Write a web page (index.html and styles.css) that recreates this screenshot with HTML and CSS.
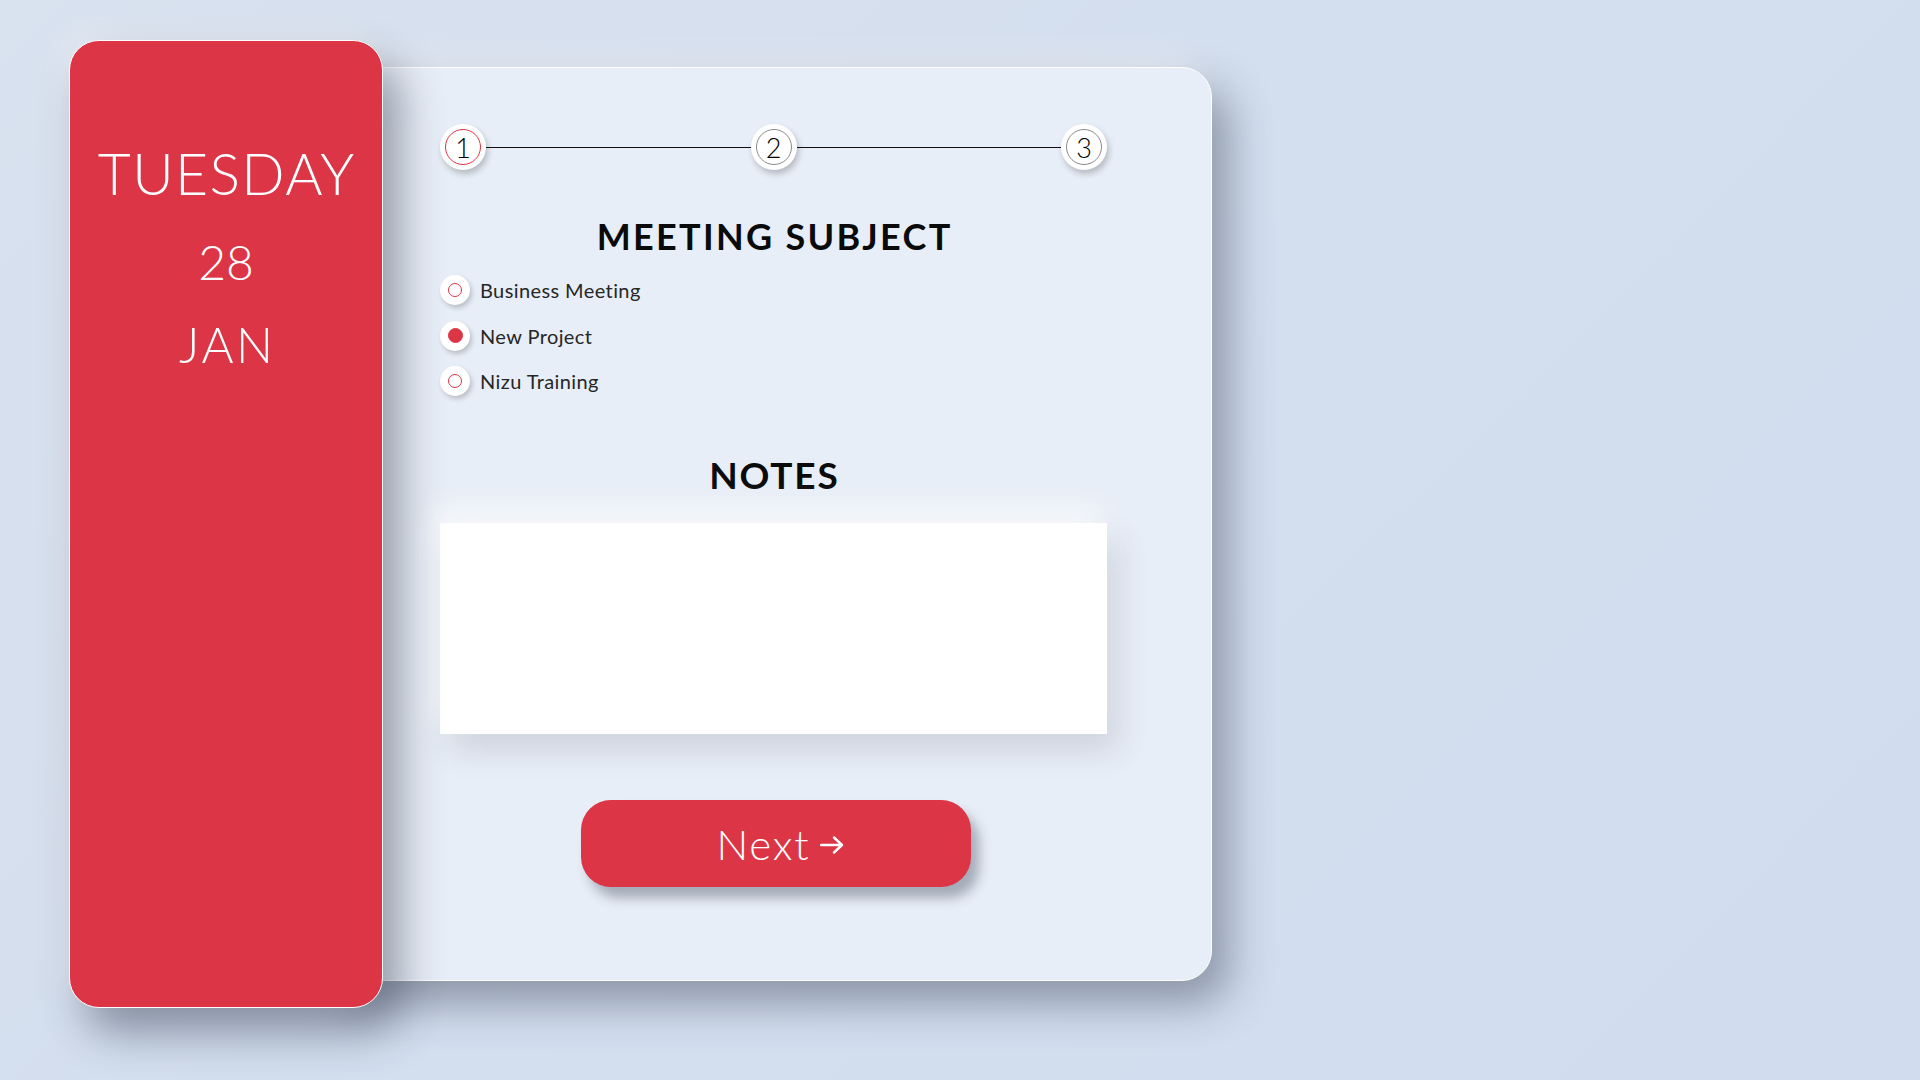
FILE: index.html
```html
<!DOCTYPE html>
<html lang="en">
<head>
<meta charset="utf-8">
<title>Meeting</title>
<link rel="stylesheet" href="styles.css">
</head>
<body>
<div class="scene">
  <aside class="date-panel">
    <div class="day">TUESDAY</div>
    <div class="num">28</div>
    <div class="month">JAN</div>
  </aside>
  <main class="card">
    <div class="steps">
      <div class="step active"><span class="ring">1</span></div>
      <div class="step-line"></div>
      <div class="step"><span class="ring">2</span></div>
      <div class="step-line"></div>
      <div class="step"><span class="ring">3</span></div>
    </div>
    <h2 class="section-title subject-title">MEETING SUBJECT</h2>
    <div class="options">
      <label class="option"><span class="radio"><span class="mark"></span></span><span class="opt-label">Business Meeting</span></label>
      <label class="option"><span class="radio checked"><span class="mark"></span></span><span class="opt-label">New Project</span></label>
      <label class="option"><span class="radio"><span class="mark"></span></span><span class="opt-label">Nizu Training</span></label>
    </div>
    <h2 class="section-title notes-title">NOTES</h2>
    <div class="notes"></div>
    <div class="actions">
      <button class="next-btn"><span>Next</span><svg class="arrow" width="24" height="18" viewBox="0 0 24 18"><path d="M1 9 H22 M14 1.5 L22 9 L14 16.5" fill="none" stroke="#fff" stroke-width="2.4" stroke-linecap="round" stroke-linejoin="round"/></svg></button>
    </div>
  </main>
</div>
</body>
</html>
```
FILE: styles.css
```css
* { box-sizing: border-box; }
html, body { margin: 0; height: 100%; }
body {
  width: 1920px;
  height: 1080px;
  overflow: hidden;
  background: linear-gradient(135deg, #d9e2ef 0%, #d3deee 45%, #d1dcee 100%);
  font-family: "Lato", "Open Sans", sans-serif;
  color: #111;
}
.scene {
  display: flex;
  align-items: flex-start;
  padding: 40px 0 0 69px;
}
.date-panel {
  position: relative;
  z-index: 2;
  width: 314px;
  height: 968px;
  background: #dc3545;
  border: 1px solid #fff;
  border-radius: 30px;
  box-shadow: 16px 24px 44px rgba(35, 45, 65, 0.45), -8px -8px 24px rgba(255,255,255,0.35);
  display: flex;
  flex-direction: column;
  align-items: center;
  padding-top: 104px;
  color: #fff;
  font-weight: 300;
}
.day { font-size: 57px; line-height: 1; letter-spacing: 1.4px; margin-right: -1.4px; }
.num { font-size: 48px; line-height: 1; margin-top: 36px; }
.month { font-size: 49px; line-height: 1; margin-top: 34px; letter-spacing: 2.5px; margin-right: -2.5px; }

.card {
  position: relative;
  z-index: 1;
  margin-left: -48px;
  margin-top: 27px;
  width: 877px;
  height: 914px;
  background: #e8eef7;
  border: 1px solid #fff;
  border-radius: 30px;
  box-shadow: 16px 22px 44px rgba(35, 45, 65, 0.42), -10px -10px 30px rgba(255,255,255,0.45);
  padding: 56px 104px 0 104px;
  display: flex;
  flex-direction: column;
}
.steps {
  display: flex;
  align-items: center;
  height: 46px;
}
.step {
  width: 46px;
  height: 46px;
  flex: 0 0 46px;
  border-radius: 50%;
  background: #fff;
  box-shadow: 2px 4px 6px rgba(0,0,0,0.22);
  display: flex;
  align-items: center;
  justify-content: center;
}
.ring {
  width: 36px;
  height: 36px;
  border-radius: 50%;
  border: 1px solid #8a8a8a;
  display: flex;
  align-items: center;
  justify-content: center;
  font-size: 27px;
  font-weight: 300;
  line-height: 1;
  color: #000;
  padding-top: 1px;
}
.step.active .ring { border-color: #dc3545; }
.step-line {
  flex: 1;
  height: 1px;
  background: #111;
}
.section-title {
  margin: 0;
  font-size: 36px;
  line-height: 1;
  font-weight: 700;
  text-align: center;
  color: #0a0a0a;
}
.subject-title { margin-top: 48px; letter-spacing: 2.3px; margin-right: -2.3px; }
.options {
  display: flex;
  flex-direction: column;
  gap: 15.5px;
  margin-top: 21px;
}
.option {
  display: flex;
  align-items: center;
  gap: 10px;
  height: 30px;
}
.radio {
  width: 30px;
  height: 30px;
  border-radius: 50%;
  background: #fff;
  box-shadow: 2px 3px 5px rgba(0,0,0,0.2);
  display: flex;
  align-items: center;
  justify-content: center;
}
.mark {
  width: 14px;
  height: 14px;
  border-radius: 50%;
  border: 1px solid #dc3545;
}
.radio.checked .mark { background: #dc3545; width: 15px; height: 15px; }
.opt-label {
  font-size: 20px;
  font-weight: 400;
  letter-spacing: 0.4px;
  color: #262626;
}
.notes-title { margin-top: 60px; font-size: 37px; letter-spacing: 1.8px; margin-right: -1.8px; }
.notes {
  margin-top: 30px;
  width: 667px;
  height: 211px;
  background: #fff;
  box-shadow: 10px 16px 30px rgba(60, 70, 90, 0.16), -6px -12px 26px rgba(255,255,255,0.8);
}
.actions {
  display: flex;
  justify-content: center;
  margin-top: 66px;
  padding-left: 5px;
}
.next-btn {
  width: 390px;
  height: 87px;
  border: none;
  border-radius: 30px;
  background: #dc3545;
  color: #fff;
  font-family: "Lato", "Open Sans", sans-serif;
  font-size: 42px;
  font-weight: 300;
  letter-spacing: 1.8px;
  display: flex;
  align-items: center;
  justify-content: center;
  gap: 9px;
  padding: 0 0 0 8px;
  box-shadow: 8px 11px 12px rgba(40, 50, 70, 0.35);
}
.arrow { margin-top: 2px; }
```
